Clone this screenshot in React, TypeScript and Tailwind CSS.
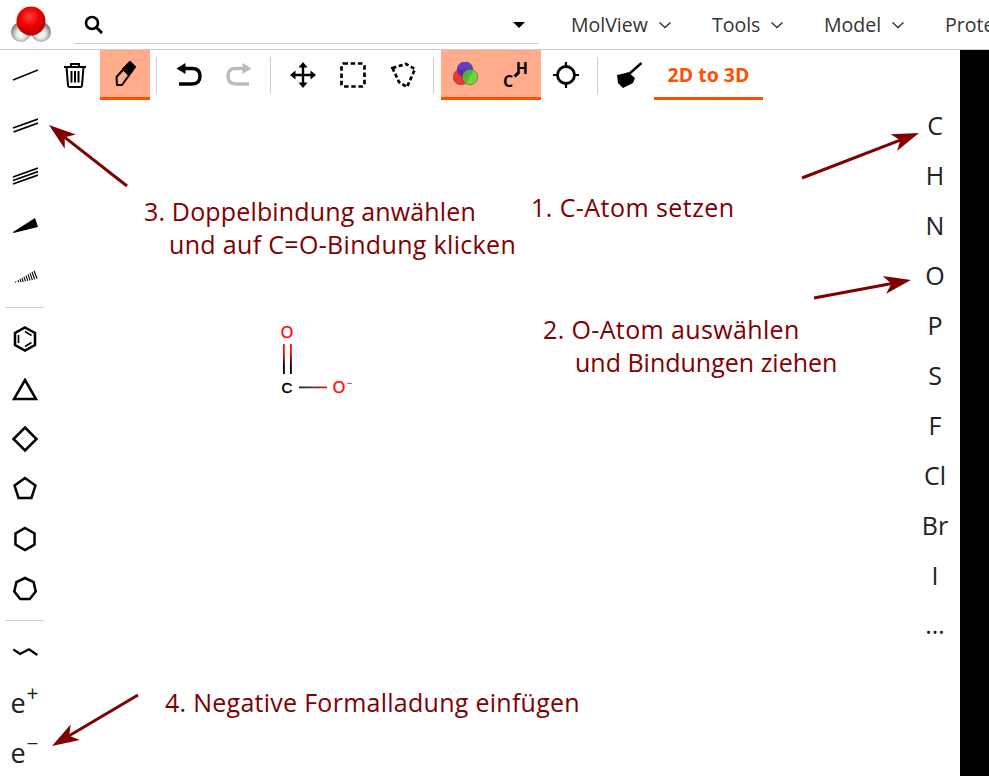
import type { ReactNode } from "react";

const Arrow = ({ x1, y1, x2, y2 }: { x1: number; y1: number; x2: number; y2: number }) => {
  const len = Math.hypot(x2 - x1, y2 - y1);
  const ux = (x2 - x1) / len;
  const uy = (y2 - y1) / len;
  const at = (back: number, side: number) =>
    `${x2 - ux * back - uy * side},${y2 - uy * back + ux * side}`;
  return (
    <g>
      <line x1={x1} y1={y1} x2={x2 - ux * 18} y2={y2 - uy * 18} stroke="#800000" strokeWidth="3" />
      <polygon points={`${x2},${y2} ${at(27, 9)} ${at(20, 0)} ${at(27, -9)}`} fill="#800000" />
    </g>
  );
};

const Icon = ({ children, size = 26 }: { children: ReactNode; size?: number }) => (
  <svg width={size} height={size} viewBox={`0 0 ${size} ${size}`} fill="none" stroke="#000" strokeWidth="2">
    {children}
  </svg>
);

const Btn = ({ children, active }: { children: ReactNode; active?: boolean }) => (
  <button
    type="button"
    className={`flex h-[50px] w-[50px] shrink-0 items-center justify-center ${
      active ? "border-b-[3px] border-[#ff5000] bg-[#ffab8c] pt-[3px]" : ""
    }`}
  >
    {children}
  </button>
);

const VSep = ({ className = "mr-[7px] ml-[6px]" }: { className?: string }) => (
  <div className={`mt-[7px] h-[37px] w-px shrink-0 bg-[#ccc] ${className}`} />
);
const HSep = ({ className }: { className: string }) => (
  <div className={`mb-[6px] ml-[6px] h-px w-[38px] shrink-0 bg-[#ccc] ${className}`} />
);

const Polygon = ({ sides, r = 11 }: { sides: number; r?: number }) => {
  const pts = Array.from({ length: sides }, (_, i) => {
    const a = (((360 / sides) * i - 90) * Math.PI) / 180;
    return `${13 + r * Math.cos(a)},${13 + r * Math.sin(a)}`;
  }).join(" ");
  return (
    <Icon>
      <polygon points={pts} strokeWidth="2.5" />
    </Icon>
  );
};

const menus = [
  { label: "MolView", width: "w-[141px]" },
  { label: "Tools", width: "w-[112px]" },
  { label: "Model", width: "w-[121px]" },
];

const atoms = ["C", "H", "N", "O", "P", "S", "F", "Cl", "Br", "I"];

const Chevron = () => (
  <svg width="12" height="8" viewBox="0 0 12 8" fill="none" stroke="#333" strokeWidth="1.4">
    <path d="M.5 1.500 6 6.500l5.500-5" />
  </svg>
);

const Logo = () => (
  <svg width="44" height="40" viewBox="0 0 44 40">
    <defs>
      <radialGradient id="red" cx="0.45" cy="0.35" r="0.65">
        <stop offset="0" stopColor="#ff4040" />
        <stop offset="0.5" stopColor="#f00000" />
        <stop offset="1" stopColor="#b80000" />
      </radialGradient>
      <radialGradient id="white" cx="0.5" cy="0.6" r="0.55">
        <stop offset="0" stopColor="#ffffff" />
        <stop offset="0.45" stopColor="#e4e4e4" />
        <stop offset="1" stopColor="#767676" />
      </radialGradient>
    </defs>
    <circle cx="11" cy="27" r="10" fill="url(#white)" />
    <circle cx="31" cy="27" r="10" fill="url(#white)" />
    <circle cx="21" cy="16" r="14.500" fill="url(#red)" />
  </svg>
);

const noteClass =
  "absolute whitespace-nowrap font-['Open_Sans',sans-serif] text-[25px] leading-[33px] text-[#800000]";

export default function App() {
  return (
    <div className="relative flex h-screen w-full flex-col overflow-hidden bg-white font-['Open_Sans',sans-serif] text-[#333]">
      <header className="flex h-[50px] shrink-0 items-center border-b border-[#ccc]">
        <div className="ml-[10px] flex w-[65px] shrink-0 items-start self-start pt-[5px]">
          <Logo />
        </div>
        <div className="flex h-[44px] w-[463px] shrink-0 items-center justify-between self-start border-b border-[#ccc] pt-[6px] pr-[13px] pl-[9px]">
          <svg width="19" height="19" viewBox="0 0 19 19" fill="none" stroke="#000">
            <circle cx="8" cy="8" r="6" strokeWidth="2.6" />
            <path d="M12.5 12.5 18 18" strokeWidth="3" />
          </svg>
          <div className="h-0 w-0 border-x-[6px] border-t-[6px] border-x-transparent border-t-black" />
        </div>
        <nav className="ml-[33px] flex items-center whitespace-nowrap pt-[1px] text-[19.5px]">
          {menus.map((menu) => (
            <div key={menu.label} className={`flex items-center gap-[11px] ${menu.width}`}>
              <span>{menu.label}</span>
              <Chevron />
            </div>
          ))}
          <span>Protein</span>
        </nav>
      </header>

      <div className="flex min-h-0 flex-1">
        <aside className="flex w-[50px] shrink-0 flex-col">
          <Btn>
            <Icon>
              <path d="M1 18 26 8" strokeWidth="1.6" />
            </Icon>
          </Btn>
          <Btn>
            <Icon>
              <path d="M1 16 26 7M1.500 20 26 11" strokeWidth="1.8" />
            </Icon>
          </Btn>
          <Btn>
            <Icon>
              <path d="M1 15 26 6M1 18.500 26 9.500M1 22 26 13" strokeWidth="1.7" />
            </Icon>
          </Btn>
          <Btn>
            <Icon>
              <polygon points="1,20 23,6 26,15 1.500,21" fill="#000" stroke="none" />
            </Icon>
          </Btn>
          <Btn>
            <Icon>
              <path
                d="M3.500 19.500l.3 1M6 18.300l.7 2M8 17l1 3M10 16l1.200 3.800M12 14.800l1.500 4.500M14 13.600l1.800 5.300M16 12.400l2.100 6M18 11.200l2.400 6.800M20 10l2.700 7.400M22 8.800l3 7.700"
                strokeWidth="1.100"
              />
            </Icon>
          </Btn>
          <HSep className="mt-[7px]" />
          <Btn>
            <Icon>
              <polygon points="13,1.500 23,7 23,19 13,24.500 3,19 3,7" strokeWidth="2.5" />
              <path d="M13 5.500 19.500 9.500M19.500 16.500 13 20.500M6.500 9v8" strokeWidth="1.600" />
            </Icon>
          </Btn>
          <Btn>
            <Icon>
              <polygon points="13,4 24,23 2,23" strokeWidth="2.500" />
            </Icon>
          </Btn>
          <Btn>
            <Polygon sides={4} r={11.5} />
          </Btn>
          <Btn>
            <Polygon sides={5} />
          </Btn>
          <Btn>
            <Polygon sides={6} />
          </Btn>
          <Btn>
            <Polygon sides={7} />
          </Btn>
          <HSep className="mt-[6px]" />
          <Btn>
            <Icon>
              <path d="M1.300 10.300 8 15 17 10.300 25.300 16" strokeWidth="2.200" />
            </Icon>
          </Btn>
          <Btn>
            <span className="-ml-[1px] text-[27px] leading-none text-[#222]">
              e<sup className="top-[-12px] ml-[1px] text-[21px] leading-none">+</sup>
            </span>
          </Btn>
          <Btn>
            <span className="-ml-[1px] text-[27px] leading-none text-[#222]">
              e<sup className="top-[-12px] ml-[1px] text-[21px] leading-none">−</sup>
            </span>
          </Btn>
        </aside>

        <main className="relative flex min-w-0 flex-1 flex-col">
          <div className="flex h-[50px] shrink-0 items-start">
            <Btn>
              <svg width="24" height="26" viewBox="0 0 24 26" fill="none" stroke="#000">
                <path d="M1 5h22M8 5V2h8V5" strokeWidth="2" />
                <path d="M3.500 5 5 23.500q.1 1.500 1.500 1.500h11q1.400 0 1.500-1.500L20.500 5" strokeWidth="2" />
                <path d="M8.500 9v11.500M12 9v11.500M15.500 9v11.500" strokeWidth="2" />
              </svg>
            </Btn>
            <Btn active>
              <svg width="26" height="28" viewBox="0 0 26 28">
                <path d="M18 1 4.500 16 5 24H10L23 6Z" fill="none" stroke="#000" strokeWidth="2" strokeLinejoin="round" />
                <path d="M18 .5 23 6 16 14 10 8Z" fill="#000" stroke="#000" strokeLinejoin="round" />
              </svg>
            </Btn>
            <VSep />
            <Btn>
              <svg width="26" height="24" viewBox="0 0 26 24" fill="none" stroke="#000">
                <path d="M9 5.500 H16 Q24 5.500 24 13 Q24 21 16 21 H3" strokeWidth="3.400" />
                <path d="M9.500 0 .5 5.500 9.500 11Z" fill="#000" stroke="none" />
              </svg>
            </Btn>
            <Btn>
              <svg width="26" height="24" viewBox="0 0 26 24" fill="none" stroke="#bbb">
                <path d="M17 5.500 H10 Q2 5.500 2 13 Q2 21 10 21 H23" strokeWidth="3.400" />
                <path d="M16.500 0 25.500 5.500 16.500 11Z" fill="#bbb" stroke="none" />
              </svg>
            </Btn>
            <VSep />
            <Btn>
              <svg width="26" height="26" viewBox="0 0 26 26" fill="#000" stroke="#000">
                <path d="M13 3v20M3 13h20" strokeWidth="2.400" />
                <path d="M13 0 17.500 5.500H8.500ZM13 26 8.500 20.500h9ZM0 13 5.500 8.500v9ZM26 13l-5.500 4.500v-9Z" stroke="none" />
              </svg>
            </Btn>
            <Btn>
              <Icon>
                <rect x="1.500" y="1.500" width="23" height="23" rx="2" strokeWidth="2.700" strokeDasharray="4.500 2.700" />
              </Icon>
            </Btn>
            <Btn>
              <Icon>
                <polygon points="2.500,6 16,2 25,7 17,25 9,20" strokeWidth="2.700" strokeDasharray="4 2.500" />
              </Icon>
            </Btn>
            <VSep className="mr-[7px] ml-[5px]" />
            <Btn active>
              <svg width="26" height="26" viewBox="0 0 26 26" stroke="#444" strokeWidth=".5">
                <circle cx="8" cy="15" r="7.800" fill="#f02020" fillOpacity=".85" />
                <circle cx="12" cy="7.500" r="7.800" fill="#4020d8" fillOpacity=".8" />
                <circle cx="17" cy="15" r="7.800" fill="#40e020" fillOpacity=".75" />
              </svg>
            </Btn>
            <Btn active>
              <div className="relative h-[30px] w-[28px] font-['Open_Sans',sans-serif] text-[16px] leading-none font-bold text-black">
                <span className="absolute bottom-[1px] left-[1px]">C</span>
                <span className="absolute top-[0px] right-[2px]">H</span>
                <span className="absolute top-[12px] left-[13px] h-[5px] w-[2.500px] rotate-45 bg-black" />
              </div>
            </Btn>
            <Btn>
              <svg width="26" height="26" viewBox="0 0 26 26" fill="none" stroke="#000">
                <circle cx="13" cy="13" r="8.500" strokeWidth="2.800" />
                <path d="M13 0v5M13 21v5M0 13h5M21 13h5" strokeWidth="2.200" />
              </svg>
            </Btn>
            <VSep className="mr-[6px] ml-[6px]" />
            <Btn>
              <svg width="26" height="26" viewBox="0 0 26 26">
                <path d="M13 12 25.500 1" stroke="#000" strokeWidth="2.400" />
                <path d="M1 13 10 11 12 10 19 16 17 21 7 26 2 21Z" fill="#000" />
              </svg>
            </Btn>
            <button
              type="button"
              className="h-[50px] w-[109px] border-b-[3px] border-[#ff5000] pt-[3px] text-[19.5px] font-bold text-[#ff5000]"
            >
              2D to 3D
            </button>
          </div>

          <svg className="absolute top-[270px] left-[226px]" width="84" height="80" viewBox="0 0 84 80">
            <defs>
              <linearGradient id="bondV" x1="0" y1="0" x2="0" y2="1">
                <stop offset="0.3" stopColor="#ff0d0d" />
                <stop offset="0.7" stopColor="#000" />
              </linearGradient>
              <linearGradient id="bondH" x1="0" y1="0" x2="1" y2="0">
                <stop offset="0" stopColor="#222" />
                <stop offset="0.5" stopColor="#444" />
                <stop offset="1" stopColor="#ff0d0d" />
              </linearGradient>
            </defs>
            <text x="11" y="18" textAnchor="middle" fontFamily="Liberation Sans" fontSize="16" stroke="#ff0d0d" strokeWidth=".4" fill="#ff0d0d">O</text>
            <text x="11" y="73" textAnchor="middle" fontFamily="Liberation Sans" fontSize="15" stroke="#000" strokeWidth=".5" fill="#000">C</text>
            <text x="63" y="73" textAnchor="middle" fontFamily="Liberation Sans" fontSize="16" stroke="#ff0d0d" strokeWidth=".4" fill="#ff0d0d">O</text>
            <text x="74" y="67" textAnchor="middle" fontFamily="Liberation Sans" fontSize="10" fill="#ff0d0d">−</text>
            <rect x="7" y="24" width="1.800" height="30" fill="url(#bondV)" />
            <rect x="14" y="24" width="1.800" height="30" fill="url(#bondV)" />
            <rect x="23" y="66.500" width="28" height="1.800" fill="url(#bondH)" />
          </svg>

          <p className={`${noteClass} top-[145px] left-[94px]`}>
            <span className="tracking-[0.16px]">3. Doppelbindung anwählen</span>
            <br />
            <span className="ml-[25px] tracking-[0.33px]">und auf C=O-Bindung klicken</span>
          </p>
          <p className={`${noteClass} top-[141px] left-[481px] tracking-[0.44px]`}>1. C-Atom setzen</p>
          <p className={`${noteClass} top-[263px] left-[493px]`}>
            <span className="tracking-[0.37px]">2. O-Atom auswählen</span>
            <br />
            <span className="ml-[32px]">und Bindungen ziehen</span>
          </p>
          <p className={`${noteClass} top-[636px] left-[115px] tracking-[0.27px]`}>4. Negative Formalladung einfügen</p>
        </main>

        <aside className="flex w-[50px] shrink-0 flex-col pt-[50px] text-[25px] text-[#222]">
          {atoms.map((atom) => (
            <div key={atom} className="flex h-[50px] shrink-0 items-center justify-center pt-[1px]">
              {atom}
            </div>
          ))}
          <div className="flex h-[50px] shrink-0 items-center justify-center">…</div>
        </aside>

        <div className="w-[29px] shrink-0 bg-black" />
      </div>

      <svg className="pointer-events-none absolute inset-0" width="989" height="776">
        <Arrow x1={802} y1={178} x2={919} y2={133} />
        <Arrow x1={814} y1={298} x2={911} y2={280} />
        <Arrow x1={127} y1={186} x2={49} y2={125} />
        <Arrow x1={138} y1={695} x2={52} y2={746} />
      </svg>
    </div>
  );
}
